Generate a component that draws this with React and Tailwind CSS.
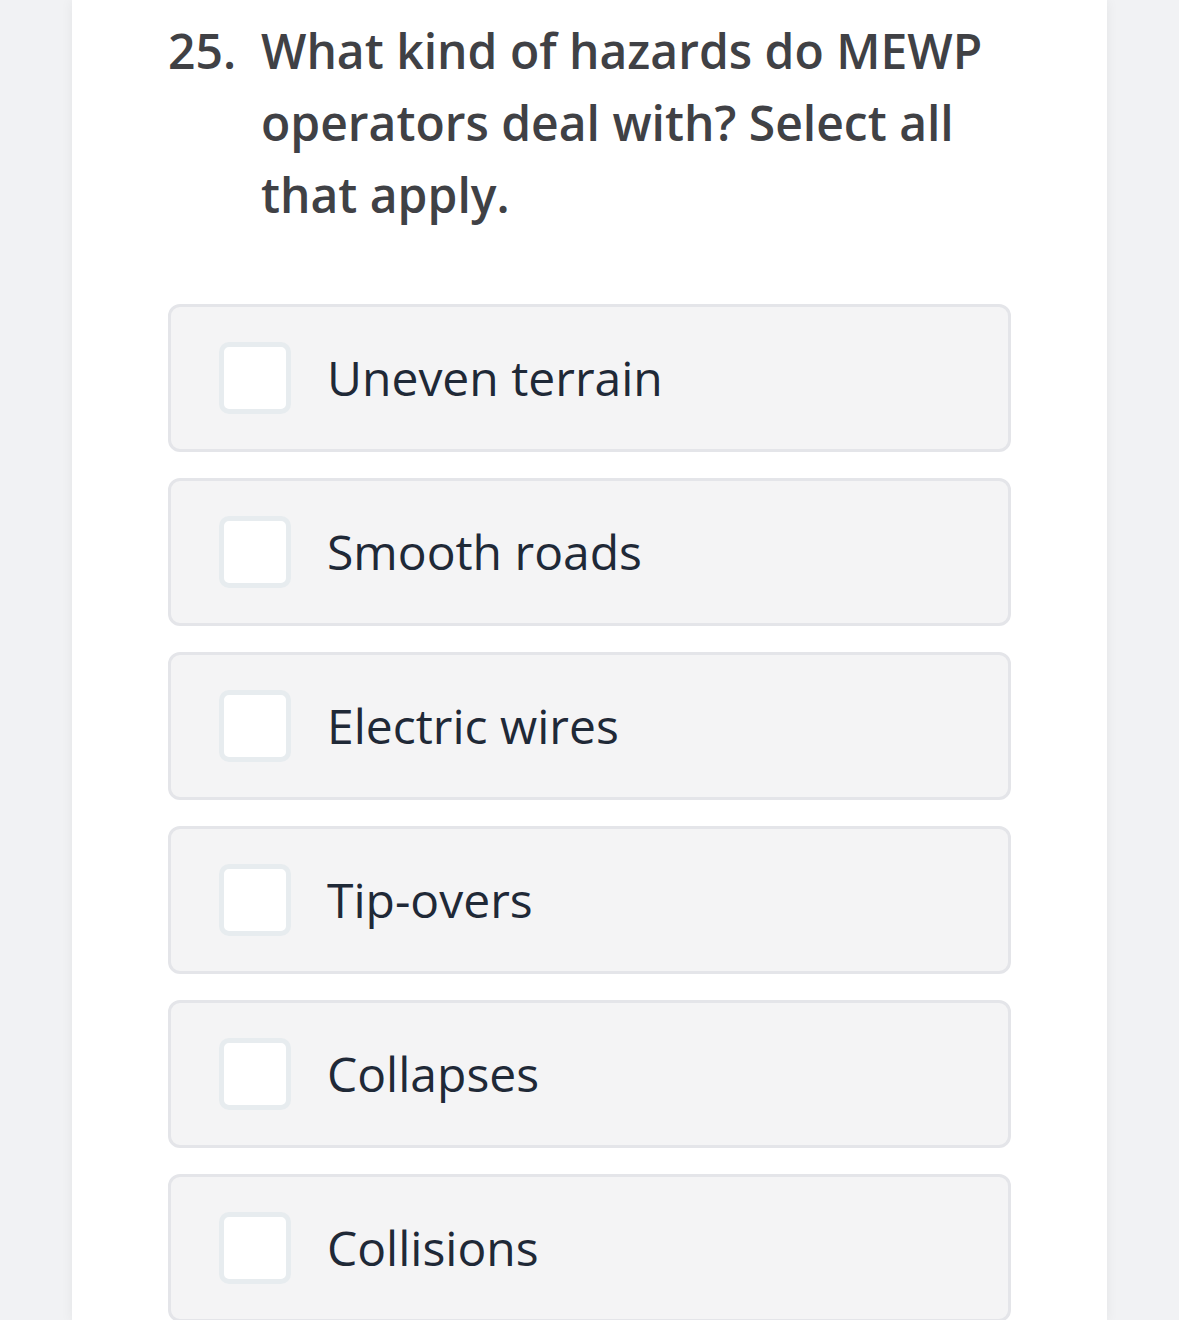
const options = [
  'Uneven terrain',
  'Smooth roads',
  'Electric wires',
  'Tip-overs',
  'Collapses',
  'Collisions',
]

const App = () => {
  return (
    <div className="min-h-[1320px] bg-[#f1f2f4] font-['Open_Sans',sans-serif]">
      <div className="mx-[72px] min-h-[1320px] bg-white px-24 pt-[15px] shadow-[0_0_12px_rgba(0,0,0,0.06)]">
        <div className="flex text-[48px] font-semibold leading-[72px] text-[#404145]">
          <span className="w-[93px] shrink-0">25.</span>
          <span>What kind of hazards do MEWP operators deal with? Select all that apply.</span>
        </div>
        <ul className="mt-[73px] flex flex-col gap-[26px]">
          {options.map((opt) => (
            <li
              key={opt}
              className="flex h-[148px] items-center rounded-[12px] border-[3px] border-[#e4e5e9] bg-[#f4f4f5] pl-[48px]"
            >
              <span className="h-[72px] w-[72px] shrink-0 rounded-[10px] border-[5px] border-[#e7ecef] bg-white" />
              <span className="ml-[36px] text-[48px] leading-none text-[#1f2937]">{opt}</span>
            </li>
          ))}
        </ul>
      </div>
    </div>
  )
}

export default App
